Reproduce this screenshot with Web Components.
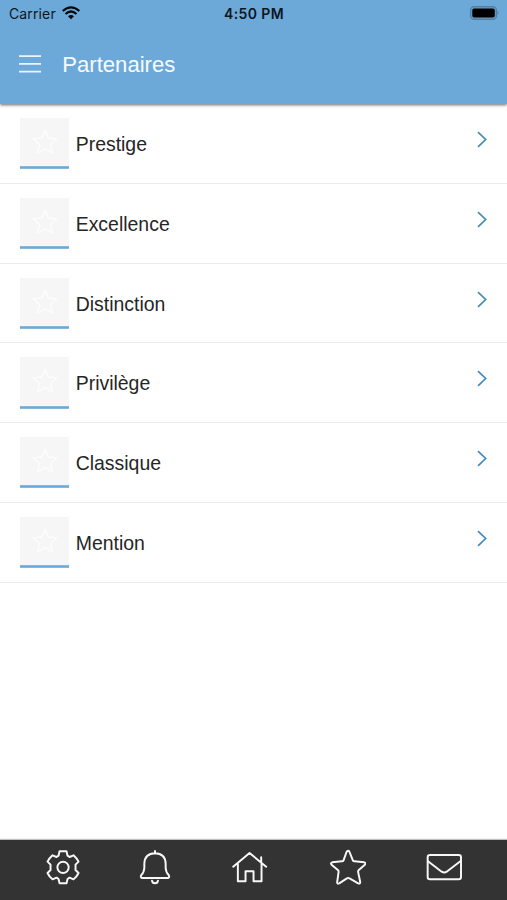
<!DOCTYPE html>
<html lang="fr">
<head>
<meta charset="utf-8">
<title>Partenaires</title>
<style>
html,body{margin:0;height:100%;background:#fff;font-family:"Liberation Sans",Arial,sans-serif;overflow:hidden}
</style>
</head>
<body>
<partner-app></partner-app>
<script>
const define = (name, html) => customElements.define(name, class extends HTMLElement {
  constructor() {
    super();
    this.attachShadow({mode: 'open'}).innerHTML = html;
  }
});

define('status-bar', `
<style>
:host{display:grid;grid-template-columns:1fr auto 1fr;align-items:center;height:27px;padding:0 8px 0 9px;font-family:Inter,sans-serif;color:#0c161f}
.l{display:flex;align-items:center;gap:6px;font-size:14px;letter-spacing:.13px}
.l svg{margin-top:-2px}
.t{font-size:14px;font-weight:600;letter-spacing:.38px}
.b{justify-self:end;margin-top:-1px}
svg{display:block}
</style>
<div class="l"><span>Carrier</span>
<svg width="18" height="14" viewBox="0 0 54 42" fill="none" stroke="#05090d" stroke-width="6.5"><path d="M2 15Q27-7 52 15M10.500 24Q27 9 43.500 24"/><path d="M18 31Q27 23 36 31L27 40Z" fill="#05090d" stroke="none"/></svg></div>
<span class="t">4:50 PM</span>
<svg class="b" width="30" height="14" viewBox="0 0 30 14"><rect x="1.500" y=".6" width="26" height="12.800" rx="3.700" fill="#6698bf" stroke="#4f7fa5" stroke-width="1.100"/><rect x="3.300" y="2.500" width="22.500" height="9" rx="1.900" fill="#000"/><path d="M28.500 4.800Q30.500 7 28.500 9.200Z" fill="#4f7fa5"/></svg>
`);

define('title-bar', `
<style>
:host{display:flex;align-items:center;gap:21.300px;height:75px;padding:0 19px;color:#f6fbff;font-size:22.100px;line-height:26px}
svg{display:block;margin-top:-1px}
</style>
<svg width="22" height="20" viewBox="0 0 22 20" stroke="#e9f5ff" stroke-width="1.800"><path d="M0 2.200H22M0 9.900H22M0 17.600H22"/></svg>
<span><slot></slot></span>
`);

define('partner-thumb', `
<style>
:host{display:flex;flex-direction:column;width:49px;margin-left:.3px}
.pic{display:flex;align-items:center;justify-content:center;height:48.300px;background:#f6f6f6}
.line{height:2.600px;background:#6aa9d8}
svg{display:block}
</style>
<div class="pic"><svg width="28" height="28" viewBox="0 0 28 28" fill="none" stroke="#fdfdfd" stroke-width="1.300" stroke-linejoin="round"><path d="M14 2.200L17.400 10 26 10.800 19.500 16.500 21.400 25 14 20.600 6.600 25 8.500 16.500 2 10.800 10.600 10Z"/></svg></div>
<svg width="49" height="3" viewBox="0 0 49 3"><rect y=".2" width="49" height="2.600" fill="#6aa9d8"/></svg>
`);

define('partner-row', `
<style>
:host{display:flex;box-sizing:border-box;height:79.750px;padding:14px 20px 0;border-bottom:1px solid #ebebeb;color:#262626;font-size:19.450px;line-height:24px}
.name{flex:1;padding:14px 0 0 6.400px}
svg{display:block;margin-top:13px}
</style>
<partner-thumb></partner-thumb>
<span class="name"><slot></slot></span>
<svg width="10" height="17" viewBox="0 0 10 17" fill="none" stroke="#3c8ab9" stroke-width="1.600"><path d="M1 1.200L8.700 8.500 1 15.800"/></svg>
`);

define('tab-bar', `
<style>
:host{display:grid;grid-template-columns:92.500px 94.500px 98px 96.500px 36px;box-sizing:border-box;height:60px;padding:9px 0 0 44.800px;background:#333;box-shadow:0 -1px 1px rgba(0,0,0,.25)}
svg{display:block;width:36px;height:36px;fill:none;stroke:#f7f7f7;stroke-width:5.900;stroke-linejoin:round;stroke-linecap:round}
</style>
<svg viewBox="44.400 42 108 108"><circle cx="98.500" cy="97" r="17"/><path d="M88 49H109L112 62 118 66 130 61Q140 70 145 80L136 89V105L145 114Q140 125 130 133L118 128 112 132 109 145H88L85 132 79 128 67 133Q57 125 52 114L61 105V89L52 80Q57 70 67 61L79 66 85 62Z"/></svg>
<svg viewBox="322 42 108 108"><path d="M376 48V55M337 129Q331 127 335 120Q343 113 344 99V86Q345 56 376 55Q407 56 408 86V99Q409 113 417 120Q421 127 415 129Z"/><path d="M367 137Q368 145 376 145Q384 145 385 137"/></svg>
<svg viewBox="50.400 42 108 108"><path d="M54 95L103 54 153 95M138 80V67M68 85V139H91V109H115V139H139V85"/></svg>
<svg viewBox="59.400 42 108 108"><path d="M114 47Q117 47 118 51L128 76Q129 79 133 79L162 82Q169 84 164 89L145 106Q143 108 144 112L150 141Q150 148 144 145L118 130Q114 128 110 130L87 145Q80 148 81 141L85 112Q86 108 83 105L64 89Q60 84 66 82L95 79Q99 79 100 76L109 51Q111 47 114 47Z"/></svg>
<svg viewBox="349 42 108 108"><rect x="354" y="60" width="100" height="73" rx="7"/><path d="M355 79L396 110Q404 115 411 110L452 79"/></svg>
`);

define('partner-app', `
<style>
:host{display:flex;flex-direction:column;height:900px;width:507px}
header{height:104px;background:#6ca9d8;box-shadow:0 1px 3px rgba(0,0,0,.6);position:relative}
main{flex:1}
</style>
<header><status-bar></status-bar><title-bar>Partenaires</title-bar></header>
<main>
<partner-row>Prestige</partner-row>
<partner-row>Excellence</partner-row>
<partner-row>Distinction</partner-row>
<partner-row>Privilège</partner-row>
<partner-row>Classique</partner-row>
<partner-row>Mention</partner-row>
</main>
<tab-bar></tab-bar>
`);
</script>
</body>
</html>
